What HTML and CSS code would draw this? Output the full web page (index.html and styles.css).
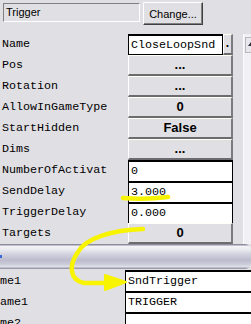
FILE: index.html
```html
<!DOCTYPE html>
<html lang="en">
<head>
  <meta charset="UTF-8" />
  <title>Trigger Properties</title>
  <link rel="stylesheet" href="styles.css">
</head>
<body>
  <div class="top">
    <div class="type-box">Trigger</div>
    <div class="btn-change">Change...</div>
  </div>

  <div class="panel">
    <div class="props">
      <div class="row">
        <div class="label">Name</div>
        <div class="field field-name">CloseLoopSnd</div>
        <div class="btn btn-dot">.</div>
      </div>
      <div class="row"><div class="label">Pos</div><div class="btn">...</div></div>
      <div class="row"><div class="label">Rotation</div><div class="btn">...</div></div>
      <div class="row"><div class="label">AllowInGameType</div><div class="btn">0</div></div>
      <div class="row"><div class="label">StartHidden</div><div class="btn">False</div></div>
      <div class="row"><div class="label">Dims</div><div class="btn">...</div></div>
      <div class="row"><div class="label">NumberOfActivat</div><div class="field">0</div></div>
      <div class="row"><div class="label">SendDelay</div><div class="field">3.000</div></div>
      <div class="row"><div class="label">TriggerDelay</div><div class="field">0.000</div></div>
      <div class="row"><div class="label">Targets</div><div class="btn">0</div></div>
    </div>
    <div class="vscroll">
      <div class="vscroll-up"></div>
    </div>
  </div>

  <div class="splitter"><span class="splitter-mark"></span></div>

  <div class="lower">
    <div class="lrow"><div class="llabel">me1</div><div class="lfield">SndTrigger</div></div>
    <div class="lrow"><div class="llabel">ame1</div><div class="lfield">TRIGGER</div></div>
    <div class="lrow"><div class="llabel">me2</div><div class="lfield"></div></div>
  </div>

  <!-- hand-drawn note over the screenshot -->
  <svg class="scribble" width="251" height="324" viewBox="0 0 251 324">
    <path d="M123 198 Q145 200 168 197" />
    <path d="M143 229 C112 230 86 238 78 252 C68 266 70 280 84 283 L110 283" />
    <polygon points="105,275 126,282 105,290" />
  </svg>
</body>
</html>
```

FILE: styles.css
```css
body {
  margin: 0;
  width: 251px;
  height: 324px;
  overflow: hidden;
  position: relative;
  background: #e0dfe3;
  color: #000;
  font-family: "Liberation Mono", "Courier New", monospace;
  font-size: 11.7px;
}
.top {
  display: flex;
  align-items: flex-start;
  gap: 3px;
  height: 34px;
  padding: 2px 0 0 3px;
  box-sizing: border-box;
}
.type-box {
  width: 137px;
  height: 19px;
  margin-top: 1px;
  box-sizing: border-box;
  border: 1px solid;
  border-color: #808080 #fff #fff #808080;
  padding: 2px 2px 0;
  font: 11px "Liberation Sans", Arial, sans-serif;
}
.btn-change {
  width: 60px;
  height: 23px;
  box-sizing: border-box;
  border: 1px solid;
  border-color: #fff #404040 #404040 #fff;
  box-shadow: inset -1px -1px 0 #808080;
  display: flex;
  align-items: center;
  justify-content: center;
  font: 11px "Liberation Sans", Arial, sans-serif;
}
.panel {
  display: flex;
  height: 210px;
}
.props {
  width: 243px;
}
.row {
  display: flex;
  height: 21px;
}
.label {
  width: 126px;
  padding-left: 2px;
  line-height: 21px;
  white-space: nowrap;
  overflow: hidden;
}
.field {
  width: 105px;
  height: 21px;
  box-sizing: border-box;
  background: #fff;
  border: 1px solid #000;
  border-top-width: 2px;
  border-bottom: 0;
  padding-left: 2px;
  line-height: 19px;
  white-space: nowrap;
  overflow: hidden;
}
.field-name {
  width: 95px;
  border-bottom: 1px solid #000;
  line-height: 18px;
}
.btn {
  width: 105px;
  height: 21px;
  box-sizing: border-box;
  background: #e0dfe3;
  border-top: 1px solid #fffff4;
  border-left: 1px solid #fff;
  border-right: 2px solid #7c7c80;
  border-bottom: 2px solid #6c6c70;
  text-align: center;
  line-height: 17px;
  font: bold 13px/17px "Liberation Sans", Arial, sans-serif;
}
.btn-dot {
  width: 10px;
  font-size: 12px;
}
.vscroll {
  width: 7px;
  border-left: 1px solid #fcfcfc;
  background: #f1f0f4;
}
.vscroll-up {
  height: 14px;
  margin: 3px 0 0 1px;
  background: #e8e8ec;
  border: 1px solid #b8b8c0;
  border-right: 0;
  position: relative;
}
.vscroll-up::after {
  content: "";
  position: absolute;
  left: 2px;
  top: 4px;
  border: 3px solid transparent;
  border-bottom: 4px solid #303040;
  border-top: 0;
}
.splitter {
  height: 25px;
  background: linear-gradient(to bottom, #8c8c9c 0, #8c8c9c 1px, #f4f4f8 2px, #ececf2 5px, #cfcfdc 11px, #bcbccd 16px, #cacad8 20px, #e2e2ea 23px, #9a9aaa 24px, #9a9aaa 25px);
  border-radius: 0 6px 6px 0;
}
.splitter-mark {
  display: block;
  width: 2px;
  height: 3px;
  position: relative;
  top: 11px;
  background: #3a6ad8;
}
.lower {
  padding-top: 1px;
}
.lrow {
  display: flex;
  height: 21px;
}
.llabel {
  width: 125px;
  line-height: 23px;
  white-space: nowrap;
  overflow: hidden;
}
.lfield {
  flex: 1;
  background: #fff;
  border-left: 1px solid #000;
  border-top: 2px solid #000;
  padding-left: 2px;
  line-height: 19px;
  white-space: nowrap;
}
.scribble {
  position: absolute;
  left: 0;
  top: 0;
  pointer-events: none;
}
.scribble path {
  fill: none;
  stroke: #f8f400;
  stroke-width: 4.5;
  stroke-linecap: round;
  stroke-linejoin: round;
}
.scribble polygon {
  fill: #f8f400;
  stroke: #f8f400;
  stroke-width: 2;
  stroke-linejoin: round;
}
```
